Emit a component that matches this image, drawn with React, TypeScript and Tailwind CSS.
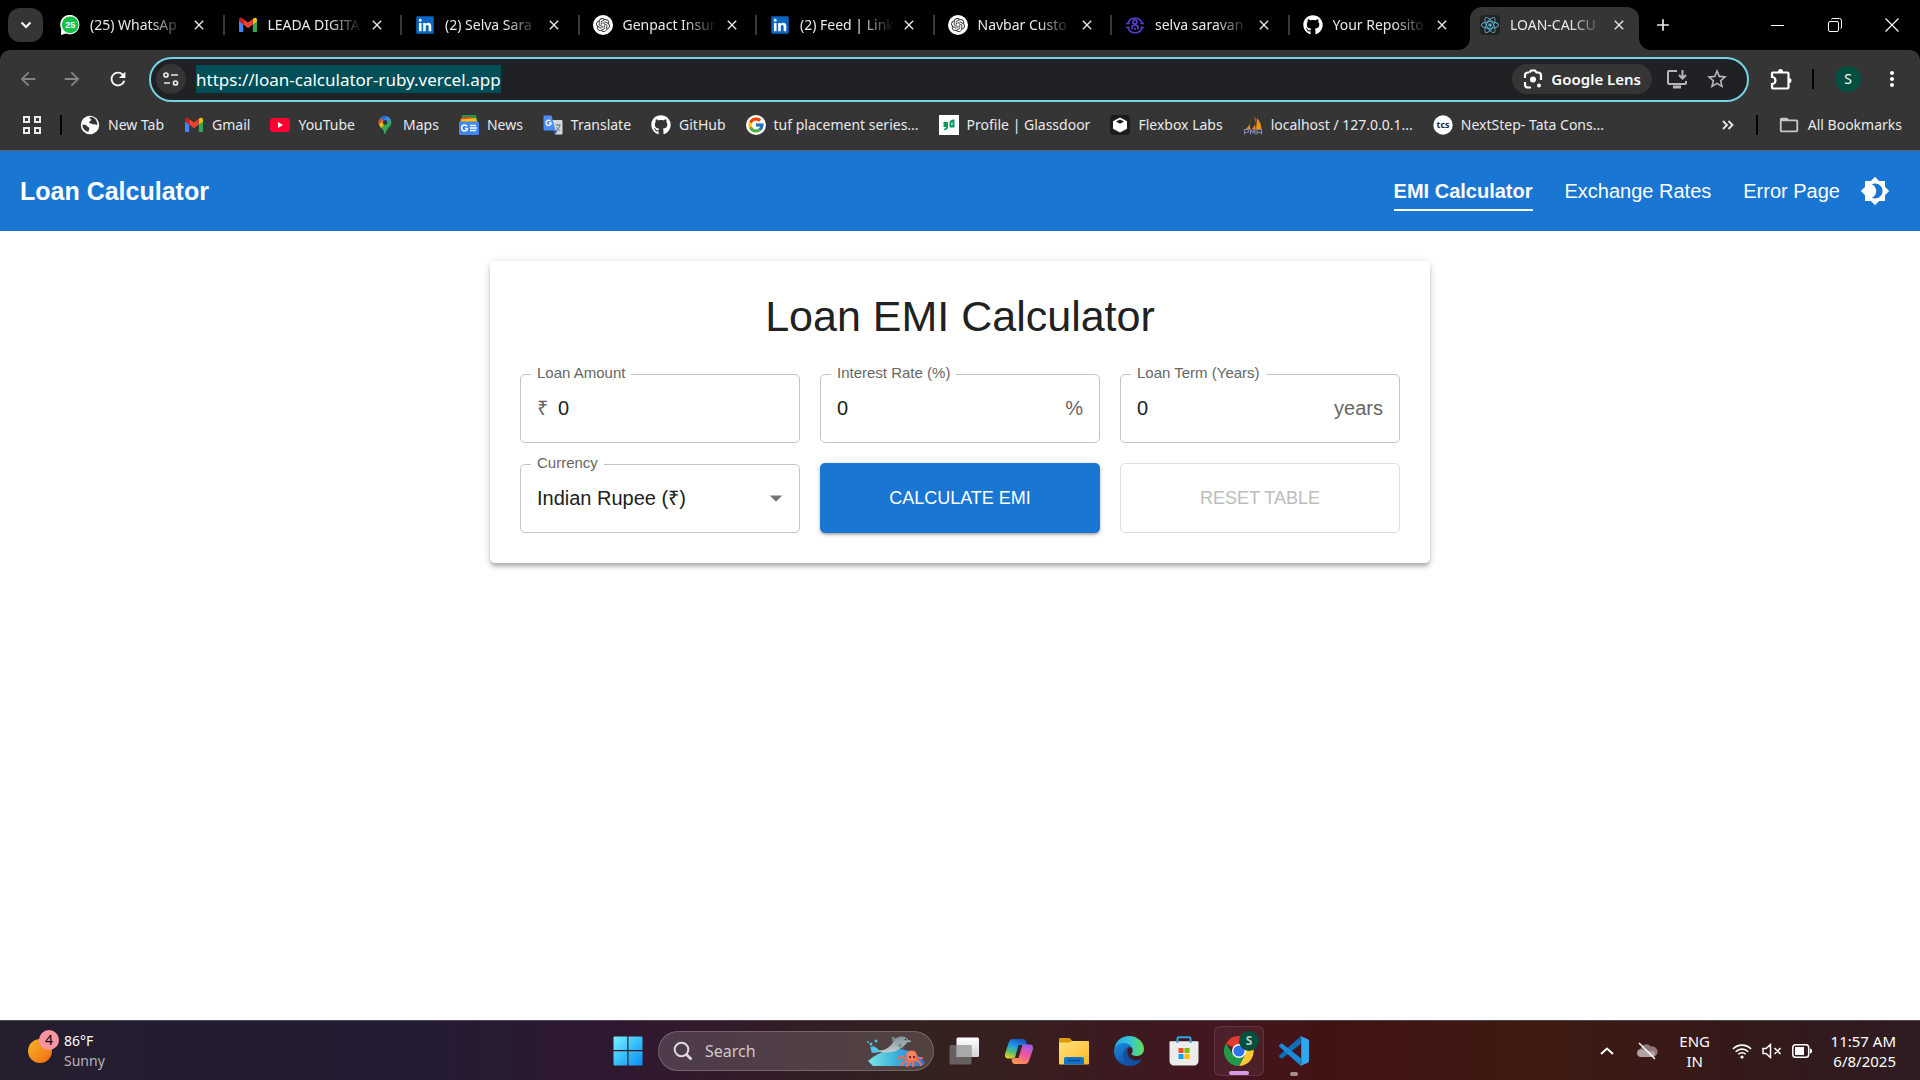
import React, { useState } from "react";
import { FaGithub, FaLinkedin } from "react-icons/fa";
import { FcGoogle } from "react-icons/fc";
import { SiOpenai, SiReact } from "react-icons/si";
import {
  MdAdd,
  MdArrowBack,
  MdArrowDropDown,
  MdArrowForward,
  MdBrightness4,
  MdClose,
  MdFolderOpen,
  MdMoreVert,
  MdRefresh,
  MdStarBorder,
} from "react-icons/md";

/* ---------- brand marks ---------- */

const WhatsAppMark = () => (
  <svg viewBox="0 0 20 20" className="size-5">
    <path d="M1 20 L1.2 14 A9.6 9.8 0 1 1 6 18.6 Z" fill="#fff" />
    <circle cx="10.2" cy="9.8" r="8.4" fill="#12c04c" />
    <text x="10.2" y="13.2" textAnchor="middle" fontSize="9" fontWeight="700" fill="#fff" fontFamily="Liberation Sans, sans-serif">25</text>
  </svg>
);

const GmailMark = () => (
  <svg viewBox="0 0 20 16" className="h-4 w-5">
    <path d="M1 2.6V14a1 1 0 0 0 1 1h3.2V6.5z" fill="#4285f4" />
    <path d="M19 2.6V14a1 1 0 0 1-1 1h-3.2V6.5z" fill="#34a853" />
    <path d="M14.8 2v5.6L19 4.4V2.7C19 .7 16.8.3 15.6 1.300z" fill="#fbbc04" />
    <path d="M5.200 7.600V2L10 5.600 14.800 2v5.600L10 11.200z" fill="#ea4335" />
    <path d="M1 2.700v1.700l4.200 3.200V2l-.8-.7C3.200.3 1 .7 1 2.700z" fill="#c5221f" />
  </svg>
);

const LinkedInMark = () => (
  <span className="flex size-5 items-center justify-center">
    <span className="flex size-4 items-center justify-center bg-white">
      <FaLinkedin className="size-5 shrink-0 text-[#0a66c2]" />
    </span>
  </span>
);

const OpenAiMark = () => (
  <span className="flex size-5 items-center justify-center rounded-full bg-white">
    <SiOpenai className="size-[14px] text-[#333]" />
  </span>
);

const PersonCycleMark = () => (
  <svg viewBox="0 0 20 20" className="size-5" fill="none" stroke="#5b3fd6" strokeWidth="1.6">
    <path d="M3 8a7.500 7.500 0 0 1 14 0M17 13a7.500 7.500 0 0 1-14 0" />
    <path d="M1.200 8.500h3.400M15.400 8.500h3.400M1.200 12.500h3.400M15.400 12.500h3.400" />
    <circle cx="10" cy="7" r="2" />
    <path d="M7 14.500v-2a3 2.500 0 0 1 6 0v2M10 12.500v2.500" />
  </svg>
);

const GitHubMark = () => <FaGithub className="size-5 text-white" />;

const ReactMark = () => (
  <span className="flex size-5 items-center justify-center rounded-sm bg-[#222]">
    <SiReact className="size-[18px] text-[#5ab9d1]" />
  </span>
);

const GlobeMark = () => (
  <svg viewBox="0 0 20 20" className="size-5">
    <circle cx="10" cy="10" r="9.200" fill="#fff" />
    <path d="M2.500 9.500c2 .3 3.500.2 4.500 1.500s2 .8 2.300 2.200-.9 1.800-.8 3.800c-3.500-.7-6.500-4-6-7.500z" fill="#353535" />
    <path d="M9 2.500c.5 1.500 2.500 1 2.200 2.600S8.800 6 9.200 7.600s2.600.7 3.900 1.600 2.200.2 4.100.9C17.600 6 15 2.600 11.500 2z" fill="#353535" />
  </svg>
);

const YouTubeMark = () => (
  <svg viewBox="0 0 20 14" className="h-[14px] w-5">
    <rect width="20" height="14" rx="3.500" fill="#ff0033" />
    <path d="M8 4v6l5-3z" fill="#fff" />
  </svg>
);

const MapsMark = () => (
  <svg viewBox="0 0 20 20" className="size-5">
    <path d="M10 1a6.500 6.500 0 0 0-6.400 6.600c0 4.300 4.900 5.400 5.800 11 .1.700 1.100.7 1.200 0 .9-5.600 5.800-6.700 5.800-11A6.500 6.500 0 0 0 10 1z" fill="#34a853" />
    <path d="M10 1a6.500 6.500 0 0 0-5 2.300l3.300 2.800L12.200 1.400A6.600 6.600 0 0 0 10 1z" fill="#1a73e8" />
    <path d="M5 3.300a6.600 6.600 0 0 0-1 6.500l4.300-5.100z" fill="#ea4335" />
    <path d="M4 9.800c.5 1.300 1.300 2.300 2.200 3.300l5.700-6.800L8.200 5z" fill="#fbbc04" />
    <path d="M12.200 1.400 8.300 6.100 11.900 9l3.900-4.600a6.500 6.500 0 0 0-3.600-3z" fill="#4285f4" />
    <circle cx="10" cy="7.500" r="2.400" fill="#353535" />
  </svg>
);

const NewsMark = () => (
  <svg viewBox="0 0 20 20" className="size-5">
    <path d="M3 0h14l1 6H3z" fill="#1e9b48" />
    <path d="M1.500 3 13 1.500l2 5H2z" fill="#ea4335" />
    <path d="M1.500 4.500 17 3l1.500 5H2z" fill="#fbbc04" />
    <rect y="6.500" width="20" height="13.500" rx="1.200" fill="#4285f4" />
    <path d="M8 11.300a3 3 0 1 0 .5 2.200H6" fill="none" stroke="#fff" strokeWidth="1.600" />
    <path d="M11 10.500h6M11 13h7M11 15.500h6" stroke="#fff" strokeWidth="1.500" />
  </svg>
);

const TranslateMark = () => (
  <svg viewBox="0 0 20 20" className="size-5">
    <path d="M8 5h10.500a1 1 0 0 1 1 1v12.500a1 1 0 0 1-1 1H12z" fill="#d5d8dc" />
    <path d="M12.500 10h5M15 9v1.500M17 10c-.5 2.500-2 4.500-4 5.500M13.500 12c1 2 2 3 3.500 4" stroke="#607d8b" fill="none" />
    <path d="M1.500.500h7L12.500 15.500h-11a1 1 0 0 1-1-1v-13a1 1 0 0 1 1-1z" fill="#4d8cf5" />
    <path d="M7.600 6.200A2.600 2.600 0 1 0 8.200 8H6" fill="none" stroke="#fff" strokeWidth="1.300" />
    <path d="m12 19.500-1.500-4h4z" fill="#1a57c4" />
  </svg>
);

const GoogleMark = () => (
  <span className="flex size-5 items-center justify-center rounded-full bg-white">
    <FcGoogle className="size-[18px]" />
  </span>
);

const GlassdoorMark = () => (
  <svg viewBox="0 0 20 20" className="size-5">
    <rect width="20" height="20" fill="#fff" />
    <path d="M4.500 7h4.500v5c0 2-1.300 3.200-3.800 3.300v-1.800c1.300 0 1.800-.6 1.800-1.500H4.500z" fill="#0a9b5a" />
    <path d="M15.500 12.500h-5V8c0-2 1.500-3.500 4-3.500h1zM13.500 7.500c-.8 0-1.200.4-1.200 1.200v1.300h1.200z" fill="#0a9b5a" />
  </svg>
);

const FlexboxMark = () => (
  <svg viewBox="0 0 20 20" className="size-5">
    <rect width="20" height="20" rx="4" fill="#1b1b1d" />
    <path d="m10 2.500 7 3.700v7.600l-7 3.700-7-3.700V6.200z" fill="#fff" />
    <path d="m6 6.500 4-2 4 2-4 2.200z" fill="#1b1b1d" />
  </svg>
);

const SailMark = () => (
  <svg viewBox="0 0 20 20" className="size-5">
    <path d="M7 3c.8 4 .2 8-5 11.500h5zM11.500.500c2 5 1 10-3 14h4zM14 3c3.500 4 4.500 8 4.500 11.500H13z" fill="#f29111" />
    <path d="M1.500 19.500v-5H4q1.500 0 1.500 1.500T4 17.500H1.500M7.500 19.500v-5l2.200 3 2.200-3v5M14 19.500v-3q0-2 2-2h2.500v5M14 17.500h4.500" fill="none" stroke="#8187b5" strokeWidth="1.200" />
  </svg>
);

const TcsMark = () => (
  <svg viewBox="0 0 20 20" className="size-5">
    <circle cx="10" cy="10" r="9.700" fill="#fff" />
    <text x="10" y="13" textAnchor="middle" fontSize="9" fontWeight="700" fill="#222" fontFamily="Open Sans, sans-serif">tcs</text>
  </svg>
);

/* ---------- browser chrome ---------- */

const tabs = [
  { title: "(25) WhatsAp", Icon: WhatsAppMark },
  { title: "LEADA DIGITA", Icon: GmailMark },
  { title: "(2) Selva Sara", Icon: LinkedInMark },
  { title: "Genpact Insur", Icon: OpenAiMark },
  { title: "(2) Feed | Link", Icon: LinkedInMark },
  { title: "Navbar Custo", Icon: OpenAiMark },
  { title: "selva saravan", Icon: PersonCycleMark },
  { title: "Your Reposito", Icon: GitHubMark },
];

const TabBody = ({ title, Icon }: { title: string; Icon: React.FC }) => (
  <>
    <span className="flex w-5 shrink-0 justify-center"><Icon /></span>
    <span className="ml-[10px] w-[99px] overflow-hidden whitespace-nowrap [mask-image:linear-gradient(to_right,black_60px,transparent_94px)]">
      {title}
    </span>
    <button aria-label={`Close ${title}`} className="flex size-5 shrink-0 items-center justify-center">
      <MdClose className="size-4" />
    </button>
  </>
);

const TabStrip = () => (
  <div className="flex h-[50px] items-center bg-black pl-2 text-sm text-[#e8eaed]">
    <button aria-label="Search tabs" className="flex h-[34px] w-[35px] shrink-0 items-center justify-center rounded-xl bg-[#353535]">
      <svg viewBox="0 0 12 8" className="h-2 w-3" fill="none" stroke="#fff" strokeWidth="2"><path d="m1.500 1.500 4.500 4.500 4.500-4.500" /></svg>
    </button>
    <div className="ml-1 grid w-[1420px] grid-cols-8">
      {tabs.map((t, i) => (
        <div key={i} className="flex h-5 items-center pl-[13px]">
          <TabBody {...t} />
          <span className={i < 7 ? "ml-auto h-5 w-[2px] bg-[#3a3a3a]" : "ml-auto h-5 w-[2px]"} />
        </div>
      ))}
    </div>
    <div className="relative ml-[3px] flex h-[43px] w-[169px] items-center self-end rounded-t-xl bg-[#353535] pb-2 pl-[10px]">
      <svg viewBox="0 0 12 12" className="absolute bottom-0 -left-3 size-3" fill="#353535"><path d="M12 0v12H0A12 12 0 0 0 12 0z" /></svg>
      <svg viewBox="0 0 12 12" className="absolute -right-3 bottom-0 size-3" fill="#353535"><path d="M0 0v12h12A12 12 0 0 1 0 0z" /></svg>
      <TabBody title="LOAN-CALCU" Icon={ReactMark} />
    </div>
    <button aria-label="New tab" className="ml-3 flex size-6 items-center justify-center"><MdAdd className="size-5" /></button>
    <div className="ml-auto flex">
      <button aria-label="Minimize" className="flex h-10 w-[57px] items-center justify-center"><span className="h-px w-[13px] bg-white" /></button>
      <button aria-label="Restore" className="flex h-10 w-[57px] items-center justify-center">
        <svg viewBox="0 0 14 14" className="size-[14px]" fill="none" stroke="#fff"><rect x=".5" y="3.500" width="10" height="10" rx="1.500" /><path d="M3.500 1.500q0-1 1.500-1h6.500q2 0 2 2v6.500q0 1.500-1 1.500" /></svg>
      </button>
      <button aria-label="Close window" className="flex h-10 w-[57px] items-center justify-center">
        <svg viewBox="0 0 14 14" className="size-[14px]" stroke="#fff" strokeWidth="1.200"><path d="m.5.500 13 13M13.500.500l-13 13" /></svg>
      </button>
    </div>
  </div>
);

const Toolbar = () => (
  <div className="flex h-[58px] items-center pr-4 pl-[6px]">
    <button aria-label="Back" className="flex w-11 justify-center text-[#848484]"><MdArrowBack className="size-[22px]" /></button>
    <button aria-label="Forward" className="flex w-11 justify-center text-[#848484]"><MdArrowForward className="size-[22px]" /></button>
    <button aria-label="Reload" className="ml-[2px] flex w-11 justify-center text-white"><MdRefresh className="size-[22px]" /></button>
    <div className="ml-[9px] flex h-[45px] flex-1 items-center rounded-full border-2 border-[#76d3e3] bg-[#202124] pr-[18px] pl-[5px]">
      <button aria-label="View site information" className="flex size-[30px] items-center justify-center rounded-full bg-[#353535]">
        <svg viewBox="0 0 16 14" className="h-[14px] w-4" fill="none" stroke="#e8e8e8" strokeWidth="1.700"><circle cx="3" cy="3" r="2" /><path d="M8 3h7M1 11h6" /><circle cx="12.500" cy="11" r="2" /></svg>
      </button>
      <input
        aria-label="Address"
        defaultValue="https://loan-calculator-ruby.vercel.app"
        className="ml-[10px] h-7 bg-[#004f58] text-[17px] text-white outline-none field-sizing-content"
      />
      <button className="ml-auto flex h-[30px] items-center rounded-full bg-[#353535] px-[11px] text-[15px] font-semibold text-white">
        <svg viewBox="0 0 20 20" className="mr-2 size-5" fill="none" stroke="#fff" strokeWidth="2.200">
          <path d="M6 3.500H5A3 3 0 0 0 2 6.500V9M2 13v2.500a3 3 0 0 0 3 3h3M6.500 3.500 8 1.500h4l1.500 2H15a3 3 0 0 1 3 3V11" />
          <circle cx="10" cy="10.500" r="3" fill="#fff" stroke="none" /><circle cx="16" cy="16.500" r="2" fill="#fff" stroke="none" />
        </svg>
        Google Lens
      </button>
      <button aria-label="Install app" className="ml-[14px]">
        <svg viewBox="0 0 22 20" className="h-5 w-[22px]" fill="none" stroke="#b5b7ba" strokeWidth="2"><path d="M11 2H3a1 1 0 0 0-1 1v11a1 1 0 0 0 1 1h16a1 1 0 0 0 1-1v-2M16.500 1v8M13 6l3.500 3.500L20 6" /><path d="M7 18h8" strokeWidth="3" /></svg>
      </button>
      <button aria-label="Bookmark this tab" className="ml-[17px]"><MdStarBorder className="size-6 text-[#b5b7ba]" /></button>
    </div>
    <button aria-label="Extensions" className="ml-4 flex w-8 justify-center">
      <svg viewBox="0 0 22 22" className="size-[22px]" fill="none" stroke="#fff" strokeWidth="2.200">
        <path d="M3 4.500h14.500a1 1 0 0 1 1 1v14a1 1 0 0 1-1 1H3a1 1 0 0 1-1-1V16a3.500 3.500 0 0 0 0-7V5.500a1 1 0 0 1 1-1z" />
        <path d="M8 4V3.500a2.500 2.500 0 0 1 5 0V4zM19 10h.3a2.300 2.500 0 0 1 0 5H19z" fill="#fff" stroke="none" />
      </svg>
    </button>
    <span className="ml-[15px] h-5 w-[2px] bg-black" />
    <button aria-label="Profile" className="ml-[21px] size-[26px] rounded-full bg-[#00503f] text-sm text-white">S</button>
    <button aria-label="Menu" className="ml-[19px] text-white"><MdMoreVert className="size-6" /></button>
  </div>
);

const bookmarks = [
  { label: "New Tab", Icon: GlobeMark },
  { label: "Gmail", Icon: GmailMark },
  { label: "YouTube", Icon: YouTubeMark },
  { label: "Maps", Icon: MapsMark },
  { label: "News", Icon: NewsMark },
  { label: "Translate", Icon: TranslateMark },
  { label: "GitHub", Icon: GitHubMark },
  { label: "tuf placement series...", Icon: GoogleMark },
  { label: "Profile | Glassdoor", Icon: GlassdoorMark },
  { label: "Flexbox Labs", Icon: FlexboxMark },
  { label: "localhost / 127.0.0.1...", Icon: SailMark },
  { label: "NextStep- Tata Cons...", Icon: TcsMark },
];

const BookmarkBar = () => (
  <div className="flex h-[43px] items-center border-b border-[#5c5f63] pr-[18px] pb-[9px] pl-[22px] text-sm whitespace-nowrap text-[#e8eaed]">
    <button aria-label="Apps">
      <svg viewBox="0 0 20 20" className="size-5" fill="none" stroke="#e8eaed" strokeWidth="2"><path d="M2 2h5v5H2zM13 2h5v5h-5zM2 13h5v5H2zM13 13h5v5h-5z" /></svg>
    </button>
    <span className="ml-[18px] h-5 w-[2px] bg-black" />
    <nav aria-label="Bookmarks" className="ml-[18px] flex items-center gap-5">
      {bookmarks.map(({ label, Icon }) => (
        <a key={label} href="#" className="flex items-center gap-2"><Icon />{label}</a>
      ))}
    </nav>
    <button aria-label="More bookmarks" className="ml-auto">
      <svg viewBox="0 0 12 10" className="h-[10px] w-3" fill="none" stroke="#e8eaed" strokeWidth="1.800"><path d="m1 1 4 4-4 4M6.500 1l4 4-4 4" /></svg>
    </button>
    <span className="ml-[22px] h-5 w-[2px] bg-black" />
    <a href="#" className="ml-5 flex items-center gap-2"><MdFolderOpen className="size-[22px] text-[#c4c7c5]" />All Bookmarks</a>
  </div>
);

/* ---------- page ---------- */

const AppHeader = () => (
  <header className="flex h-20 items-center bg-[#1976d2] pr-[30px] pl-5 text-xl text-white">
    <p className="text-[25px] font-bold">Loan Calculator</p>
    <nav className="ml-auto flex items-center gap-8">
      <a href="#" className="border-b-2 border-white pt-1.5 pb-1 font-bold">EMI Calculator</a>
      <a href="#">Exchange Rates</a>
      <a href="#">Error Page</a>
    </nav>
    <button aria-label="Toggle dark mode" className="ml-5"><MdBrightness4 className="size-[30px]" /></button>
  </header>
);

type FieldProps = { id: string; label: string; prefix?: string; suffix?: string };

const fieldBox = "relative mt-px flex h-[69px] items-center rounded-[5px] border border-[#c4c4c4] px-4 pb-[2px] text-xl text-[#212121]";
const fieldLabel = "absolute -top-3 left-[10px] bg-white px-[6px] text-[15px] leading-5 text-[#666]";

const Field = ({ id, label, prefix, suffix }: FieldProps) => {
  const [value, setValue] = useState("0");
  return (
    <div className={fieldBox}>
      <label htmlFor={id} className={fieldLabel}>{label}</label>
      {prefix && <span className="mr-[10px] text-[#666]">{prefix}</span>}
      <input id={id} inputMode="decimal" value={value} onChange={(e) => setValue(e.target.value)} className="w-0 flex-1 outline-none" />
      {suffix && <span className="text-[#666]">{suffix}</span>}
    </div>
  );
};

const CalculatorCard = () => (
  <section className="mx-auto w-full max-w-[940px] rounded-[5px] bg-white p-[30px] shadow-[0_4px_4px_-2px_rgba(0,0,0,0.2),0_4px_5px_0_rgba(0,0,0,0.14),0_1px_10px_0_rgba(0,0,0,0.12)]">
    <h1 className="text-center text-[43px] leading-[50px] text-[#212121]">Loan EMI Calculator</h1>
    <form className="mt-8 grid grid-cols-3 gap-5" onSubmit={(e) => e.preventDefault()}>
      <Field id="amount" label="Loan Amount" prefix="₹" />
      <Field id="rate" label="Interest Rate (%)" suffix="%" />
      <Field id="term" label="Loan Term (Years)" suffix="years" />
      <div className={fieldBox}>
        <label htmlFor="currency" className={fieldLabel}>Currency</label>
        <select id="currency" className="w-full appearance-none outline-none">
          <option>Indian Rupee (₹)</option>
        </select>
        <MdArrowDropDown className="pointer-events-none absolute right-2 size-[30px] text-[#757575]" />
      </div>
      <button type="submit" className="h-[70px] rounded-[5px] bg-[#1976d2] text-lg text-white shadow-[0_3px_3px_-2px_rgba(0,0,0,0.3),0_1px_4px_rgba(0,0,0,0.25)]">CALCULATE EMI</button>
      <button type="button" disabled className="h-[70px] rounded-[5px] border border-[#e0e0e0] text-lg text-[#bdbdbd]">RESET TABLE</button>
    </form>
  </section>
);

/* ---------- taskbar ---------- */

const StartIcon = () => (
  <svg viewBox="0 0 30 30" className="size-[30px]">
    <defs><linearGradient id="win" x1="0" y1="0" x2="1" y2="1"><stop offset="0" stopColor="#7cf0ff" /><stop offset=".5" stopColor="#39bffb" /><stop offset="1" stopColor="#0a8cf5" /></linearGradient></defs>
    <path d="M1.500.500h12.800v13.500H.500v-12.500a1 1 0 0 1 1-1zM15.500.500h13a1 1 0 0 1 1 1v12.500h-14zM.500 15.300h13.800v14.200H1.500a1 1 0 0 1-1-1zM15.500 15.300h14v13.200a1 1 0 0 1-1 1h-13z" fill="url(#win)" />
  </svg>
);

const OceanArt = () => (
  <svg viewBox="0 0 60 32" className="h-8 w-[60px]">
    <defs>
      <linearGradient id="sea" x1="0" x2="1"><stop offset="0" stopColor="#7be6e6" /><stop offset=".45" stopColor="#3fb4dc" /><stop offset="1" stopColor="#2f6fe0" /></linearGradient>
      <linearGradient id="dol" x1="0" y1="0" x2="0" y2="1"><stop offset="0" stopColor="#7f929b" /><stop offset="1" stopColor="#c3cdd0" /></linearGradient>
    </defs>
    <path d="M2 26C10 19 20 14 31 14s22 5 28 14l-3 3H7z" fill="url(#sea)" />
    <path d="M4 12c3-2 6 0 8 2l2 3-6 1C4 18 6 15 4 12z" fill="#4fc3e8" />
    <circle cx="10" cy="6" r="1.500" fill="#4fc3e8" /><circle cx="5" cy="9" r="1.500" fill="#4fc3e8" /><circle cx="2" cy="7" r="1" fill="#4fc3e8" />
    <path d="M11 15.500c6 .5 10-1.500 14-5.500 3-3.500 4-8 10-8.500 4-.3 6 1.500 7 3.300l3 1c1 .8 0 1.500-4 1.700-2 3-7 7-13 9-6 1.600-13 1.500-17-1z" fill="url(#dol)" />
    <path d="M30 4c-1-1.500-2.500-2-4.500-2 1 1.500 1 3 1 5zM31 10c1.500 2 4 3.500 6.500 3.500-1.500-2-1.500-3-2-5.500z" fill="#7f929b" />
    <circle cx="39.500" cy="4.500" r=".8" fill="#223" />
    <path d="M41 20c1-4 8-5 9 0 .5 2-1 4-2 5 3 1 6 1 7 5M43 25c-3-3-7-3-11-2M44 26c-3 0-7 0-9 4M45 26c-2 1-2 3-4 5M47 26c0 2 1 3 0 5M48 25c3-2 6-2 8-2" fill="none" stroke="#f0704f" strokeWidth="2.200" strokeLinecap="round" />
    <ellipse cx="45.500" cy="21" rx="4.500" ry="4.800" fill="#f58461" />
    <circle cx="44" cy="22" r="1" fill="#502" /><circle cx="48" cy="22" r="1" fill="#502" />
  </svg>
);

const TaskViewIcon = () => (
  <svg viewBox="0 0 30 28" className="h-7 w-[30px]">
    <defs><linearGradient id="tv" x1="0" y1="0" x2="0" y2="1"><stop offset="0" stopColor="#fff" /><stop offset="1" stopColor="#d4d4d4" /></linearGradient></defs>
    <rect x="7.500" y=".5" width="22.500" height="19.500" rx="1.500" fill="url(#tv)" />
    <rect x=".5" y="8" width="22" height="19.500" rx="1.500" fill="#777" fillOpacity=".75" />
    <path d="M7.500 8h15v12h-15z" fill="#a9a9a9" />
  </svg>
);

const CopilotIcon = () => (
  <svg viewBox="0 0 30 28" className="h-7 w-[30px]">
    <defs>
      <linearGradient id="cpa" x1=".6" y1="0" x2=".2" y2="1"><stop offset="0" stopColor="#1a58c9" /><stop offset=".4" stopColor="#1fa0e8" /><stop offset=".7" stopColor="#5bbf6a" /><stop offset="1" stopColor="#f2d21e" /></linearGradient>
      <linearGradient id="cpb" x1=".8" y1="0" x2=".3" y2="1"><stop offset="0" stopColor="#9a5cf0" /><stop offset=".5" stopColor="#f0559a" /><stop offset="1" stopColor="#ff9a50" /></linearGradient>
    </defs>
    <path d="M9 2h10c2 0 2.500 1 3 2.500L23 8h-4.500c-2 0-3 1-3.500 2.500L12 19c-.5 1.500-1.500 2.500-3.500 2.500H4C1 21.500.5 19 1.300 16L5 5c.8-2 2-3 4-3z" fill="url(#cpa)" />
    <path d="M21 27H11c-2 0-2.500-1-3-2.500L7.500 21.500H9c2 0 3-1 3.500-2.500L16 10c.5-1.500 1.500-2.500 3.500-2.500H26c3 0 3.500 2.500 2.700 5.500L25 24c-.8 2-2 3-4 3z" fill="url(#cpb)" />
    <path d="M14.500 8h4l-4 13H11z" fill="#33211f" />
  </svg>
);

const FolderIcon = () => (
  <svg viewBox="0 0 30 28" className="h-7 w-[30px]">
    <defs><linearGradient id="fo" x1="0" y1="0" x2="1" y2="1"><stop offset="0" stopColor="#ffe27a" /><stop offset="1" stopColor="#fcb92b" /></linearGradient></defs>
    <path d="M1 1h9.500l3 3H29v6H0V2a1 1 0 0 1 1-1z" fill="#e09b07" />
    <path d="M0 5.500h10.500L13 4h16a1 1 0 0 1 1 1v21.500a1 1 0 0 1-1 1H1a1 1 0 0 1-1-1z" fill="url(#fo)" />
    <path d="M5 27.500V22a2 2 0 0 1 2-2h16a2 2 0 0 1 2 2v5.500z" fill="#1173c7" /><path d="M9 23.500h12" stroke="#0c4a87" strokeWidth="1.500" />
  </svg>
);

const EdgeIcon = () => (
  <svg viewBox="0 0 30 30" className="size-[30px]">
    <defs>
      <linearGradient id="ea" x1="0" y1=".4" x2="1" y2=".4"><stop offset="0" stopColor="#2aa6ee" /><stop offset=".5" stopColor="#33c4d8" /><stop offset="1" stopColor="#62e052" /></linearGradient>
      <linearGradient id="eb" x1="0" y1="0" x2=".6" y2="1"><stop offset="0" stopColor="#1b8ce0" /><stop offset="1" stopColor="#0d4c9c" /></linearGradient>
    </defs>
    <path d="M.3 13C1.500 5 7.500 0 15 0c9 0 15 6.500 15 13 0 4.500-3.500 7-7.500 7-3.500 0-5-1.200-5-2 0-.7 1.200-1.300 1.200-3.500 0-3.500-3.500-6.500-8-6.500C6 8 2 10 .3 13z" fill="url(#ea)" />
    <path d="M0 15c0-5 5-8 10-8 4 0 8 2.500 8.500 6-1-1.500-3-2.200-4.500-1.500-2 1-3.500 3.500-3.500 6.500 0 5 4 8.500 9 8.500 3 0 5.500-1 7-2-2.500 3.800-7 5.500-11.500 5.500C6.500 30 0 23 0 15z" fill="url(#eb)" />
    <path d="M14 11.500c-4.500 2-6.500 7-4 12 2 4 5.500 6.200 9.500 6 3-.5 6-2.500 8-5.500.4-.7-.2-1.200-.8-.8-3 1.800-8.500 1.600-11.200-1.700-2.500-3-2.500-7-1.500-10z" fill="#11509f" />
  </svg>
);

const StoreIcon = () => (
  <svg viewBox="0 0 30 30" className="size-[30px]">
    <path d="M.5 6A.8.800 0 0 1 1.300 5.200h27.400a.8.800 0 0 1 .8.800V25a4.500 4.500 0 0 1-4.500 4.500H5A4.500 4.500 0 0 1 .5 25z" fill="#ececec" />
    <path d="M8.500 7V2.500a1.200 1.200 0 0 1 1.200-1.200h10.600a1.200 1.200 0 0 1 1.200 1.200V7" fill="none" stroke="#2aa8ea" strokeWidth="2" />
    <path d="M9.500 12h5v5h-5z" fill="#f25022" /><path d="M15.500 12h5v5h-5z" fill="#7fba00" /><path d="M9.500 18h5v5h-5z" fill="#00a4ef" /><path d="M15.500 18h5v5h-5z" fill="#ffb900" />
  </svg>
);

const ChromeIcon = () => (
  <svg viewBox="0 0 30 30" className="size-[30px]">
    <path d="M15 15 2 7.500A15 15 0 0 1 28 7.500z" fill="#e33b2e" />
    <path d="M15 8h13A15 15 0 0 1 15 30l6-11.500z" fill="#fcc934" />
    <path d="M2 7.500 9 18.500 15 22l6-3.500L15 30A15 15 0 0 1 2 7.500z" fill="#229a49" />
    <circle cx="15" cy="15" r="7" fill="#fff" /><circle cx="15" cy="15" r="5.600" fill="#2a74ee" />
  </svg>
);

const VsCodeIcon = () => (
  <svg viewBox="0 0 30 30" className="size-[30px]">
    <path d="M22 7.800 3.500 22.300a1.300 1.300 0 0 1-1.600 0L.4 21a1.200 1.200 0 0 1 0-1.800L21.500.500z" fill="#0c6fb8" />
    <path d="M22 22.200 3.500 7.700a1.300 1.300 0 0 0-1.600 0L.4 9a1.200 1.200 0 0 0 0 1.800l21.100 18.700z" fill="#1a8ad6" />
    <path d="M21.800 29.800A2 2 0 0 1 20 29c1 .8 2.200.2 2.200-1V2c0-1.200-1.200-1.800-2.200-1a2 2 0 0 1 1.800-.8L28.900 3.300A2 2 0 0 1 30 5v20a2 2 0 0 1-1.100 1.700z" fill="#34a6f0" />
  </svg>
);

const TaskButton = ({ name, children }: { name: string; children: React.ReactNode }) => (
  <button aria-label={name} className="flex size-[50px] items-center justify-center">{children}</button>
);

const Taskbar = () => (
  <footer className="grid h-[60px] shrink-0 grid-cols-[1fr_auto_1fr] items-center border-t border-[#4b4850] bg-[linear-gradient(to_right,#241e2e,#241c33_22%,#30182f_33%,#33221f_48%,#3c1b20_58%,#451520_64%,#431312_69%,#3e1a12_81%,#351919_90%,#2e1c21)] text-white">
    <button className="flex items-center gap-3 pl-7 text-left text-sm leading-5">
      <span className="relative size-6 rounded-full bg-linear-to-br from-[#f0b52c] to-[#f2660f]">
        <span className="absolute -top-[9px] -right-[7px] flex size-5 items-center justify-center rounded-full bg-[#fc95a1] text-sm text-black">4</span>
      </span>
      <span>86°F<br /><span className="text-[#b8b5bc]">Sunny</span></span>
    </button>
    <div className="flex items-center gap-[5px] pl-[2px]">
      <TaskButton name="Start"><StartIcon /></TaskButton>
      <label className="flex h-10 w-[276px] items-center rounded-full border border-white/20 bg-white/15 pr-[7px] pl-[14px]">
        <svg viewBox="0 0 20 20" className="size-5 shrink-0" fill="none" stroke="#dedbe0" strokeWidth="2"><circle cx="8.500" cy="8.500" r="6.800" /><path d="m13.500 13.500 5 5" strokeWidth="2.600" /></svg>
        <input aria-label="Search" placeholder="Search" className="ml-3 w-0 flex-1 text-base outline-none placeholder:text-[#cfc8ce]" />
        <OceanArt />
      </label>
      <TaskButton name="Task view"><TaskViewIcon /></TaskButton>
      <TaskButton name="Copilot"><CopilotIcon /></TaskButton>
      <TaskButton name="File Explorer"><FolderIcon /></TaskButton>
      <TaskButton name="Edge"><EdgeIcon /></TaskButton>
      <TaskButton name="Store"><StoreIcon /></TaskButton>
      <button aria-label="Chrome" className="relative flex size-[50px] items-center justify-center rounded-md border border-white/10 bg-white/5">
        <ChromeIcon />
        <span className="absolute top-1 right-1 flex size-5 items-center justify-center rounded-full bg-[#00503f] text-xs font-bold text-[#b6cfc9]">S</span>
        <span className="absolute bottom-0 h-1 w-5 rounded-full bg-[#d79be3]" />
      </button>
      <button aria-label="Visual Studio Code" className="relative flex size-[50px] items-center justify-center">
        <VsCodeIcon />
        <span className="absolute bottom-0 h-1 w-2 rounded-full bg-[#a3908f]" />
      </button>
    </div>
    <div className="flex items-center justify-end pr-6 text-[15px] leading-5">
      <button aria-label="Show hidden icons">
        <svg viewBox="0 0 14 8" className="h-2 w-[14px]" fill="none" stroke="#fff" strokeWidth="2"><path d="m1 7 6-5.500L13 7" /></svg>
      </button>
      <svg viewBox="0 0 22 18" className="ml-[22px] h-[18px] w-[22px]">
        <path d="M5 15a4 4 0 0 1-.5-8A6 6 0 0 1 15 4.500a5 5 0 0 1 2.500 10.500z" fill="#8d7777" /><path d="M5 15a4 4 0 0 1-1-7.500l14 2a4 4 0 0 1-1 5.500z" fill="#b3a4a4" />
        <path d="m3 1 16 16" stroke="#fff" strokeWidth="1.400" />
      </svg>
      <button className="ml-[21px] text-center">ENG<br />IN</button>
      <button aria-label="Network, volume and battery" className="ml-[22px] flex items-center gap-[10px]">
        <svg viewBox="0 0 20 16" className="h-4 w-5" fill="none" stroke="#fff" strokeWidth="1.600"><path d="M1 6a12.500 12.500 0 0 1 18 0M3.700 8.800a8.700 8.700 0 0 1 12.600 0M6.300 11.300a5.200 5.200 0 0 1 7.400 0" /><circle cx="10" cy="14" r="1.600" fill="#fff" stroke="none" /></svg>
        <svg viewBox="0 0 20 16" className="h-4 w-5" fill="none" stroke="#fff" strokeWidth="1.500"><path d="M1 5.500h3L8.500 1.500v13L4 10.500H1zM12.500 5l6 6M18.500 5l-6 6" /></svg>
        <svg viewBox="0 0 20 14" className="h-[14px] w-5"><rect x=".8" y=".8" width="15.900" height="12.400" rx="2.800" fill="none" stroke="#fff" strokeWidth="1.500" /><path d="M3 3h9v8H3zM18 4.500q2 0 2 2v1q0 2-2 2z" fill="#fff" /></svg>
      </button>
      <button className="w-[84px] text-right">11:57 AM<br />6/8/2025</button>
    </div>
  </footer>
);

export default function App() {
  return (
    <div className="flex min-h-screen flex-col bg-white font-['Noto_Sans',sans-serif]">
      <div className="bg-black">
        <TabStrip />
        <div className="rounded-t-[10px] bg-[#353535]">
          <Toolbar />
          <BookmarkBar />
        </div>
      </div>
      <div className="flex-1 font-['Liberation_Sans',sans-serif]">
        <AppHeader />
        <main className="pt-[30px]">
          <CalculatorCard />
        </main>
      </div>
      <Taskbar />
    </div>
  );
}
